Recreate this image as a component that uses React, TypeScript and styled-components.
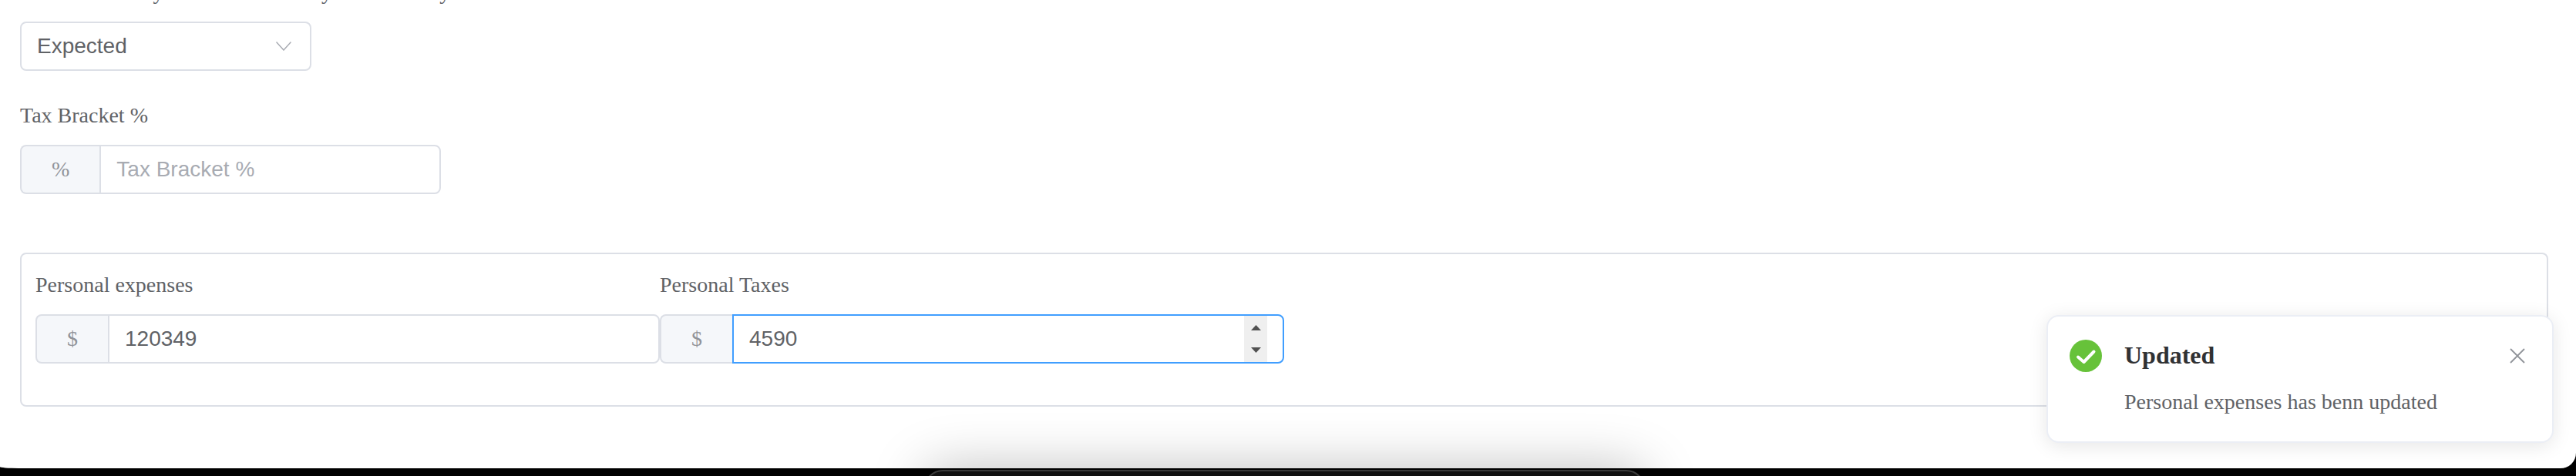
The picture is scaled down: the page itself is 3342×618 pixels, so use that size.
import React from "react";
import styled, { createGlobalStyle } from "styled-components";

const GlobalStyle = createGlobalStyle`
  html, body {
    margin: 0;
    background: #000;
  }
  * {
    box-sizing: border-box;
  }
`;

const serif = `"Liberation Serif", "Times New Roman", serif`;
const sans = `"Liberation Sans", Arial, sans-serif`;

export default function App() {
  return (
    <>
      <GlobalStyle />
      <StyledPage>
        <StyledWindow>
          <StyledClippedLabel>
            Select whether your tax was already included in your total
          </StyledClippedLabel>
          <StyledSelect>
            <span>Expected</span>
            <ChevronIcon />
          </StyledSelect>

          <StyledTaxField>
            <StyledLabel>Tax Bracket %</StyledLabel>
            <StyledInputGroup>
              <StyledAddon>%</StyledAddon>
              <StyledInputWrap>
                <StyledInput type="text" placeholder="Tax Bracket %" readOnly />
              </StyledInputWrap>
            </StyledInputGroup>
          </StyledTaxField>

          <StyledCard>
            <StyledCardGrid>
              <div>
                <StyledLabel>Personal expenses</StyledLabel>
                <StyledInputGroup>
                  <StyledAddon>$</StyledAddon>
                  <StyledInputWrap>
                    <StyledInput type="text" value="120349" readOnly />
                  </StyledInputWrap>
                </StyledInputGroup>
              </div>
              <div>
                <StyledLabel>Personal Taxes</StyledLabel>
                <StyledInputGroup>
                  <StyledAddon>$</StyledAddon>
                  <StyledInputWrap>
                    <StyledInput type="text" value="4590" readOnly $focused />
                    <StyledSpinner>
                      <svg width="13" height="7" viewBox="0 0 13 7">
                        <path d="M6.5 0L13 7H0z" fill="#505050" />
                      </svg>
                      <svg width="13" height="7" viewBox="0 0 13 7">
                        <path d="M0 0h13L6.5 7z" fill="#505050" />
                      </svg>
                    </StyledSpinner>
                  </StyledInputWrap>
                </StyledInputGroup>
              </div>
            </StyledCardGrid>
          </StyledCard>

          <StyledToast>
            <SuccessIcon />
            <StyledToastBody>
              <StyledToastTitle>Updated</StyledToastTitle>
              <StyledToastText>Personal expenses has benn updated</StyledToastText>
            </StyledToastBody>
            <StyledClose>
              <svg width="20" height="20" viewBox="0 0 20 20">
                <path d="M1 1l18 18M19 1L1 19" stroke="#909399" strokeWidth="1.8" fill="none" />
              </svg>
            </StyledClose>
          </StyledToast>
        </StyledWindow>
        <StyledDock />
      </StyledPage>
    </>
  );
}

const ChevronIcon = () => (
  <StyledChevron width="20" height="12" viewBox="0 0 20 12">
    <path d="M0.5 0.5L10 11L19.5 0.5" stroke="#a8abb2" strokeWidth="1.5" fill="none" />
  </StyledChevron>
);

const SuccessIcon = () => (
  <StyledSuccess width="42" height="42" viewBox="0 0 42 42">
    <circle cx="21" cy="21" r="21" fill="#67c23a" />
    <path
      d="M11 22.5l7.5 6.5L31.5 15.5"
      stroke="#fff"
      strokeWidth="4"
      strokeLinecap="round"
      strokeLinejoin="round"
      fill="none"
    />
  </StyledSuccess>
);

const StyledPage = styled.div`
  position: relative;
  width: 3342px;
  height: 618px;
  background: #000;
  overflow: hidden;
`;

const StyledWindow = styled.div`
  position: relative;
  height: 608px;
  padding: 0 36px 0 26px;
  background: #fff;
  border-radius: 0 0 20px 24px / 0 0 20px 2px;
  overflow: hidden;
  font-family: ${serif};
`;

const StyledLabel = styled.div`
  height: 40px;
  margin-bottom: 18px;
  font-size: 28px;
  line-height: 40px;
  color: #606266;
  white-space: nowrap;
`;

const StyledClippedLabel = styled(StyledLabel)`
  margin-top: -30px;
`;

const StyledSelect = styled.div`
  display: flex;
  justify-content: space-between;
  align-items: center;
  width: 378px;
  height: 64px;
  padding: 0 24px 0 20px;
  border: 2px solid #dcdfe6;
  border-radius: 8px;
  font-family: ${sans};
  font-size: 28px;
  color: #606266;
`;

const StyledChevron = styled.svg`
  display: block;
`;

const StyledTaxField = styled.div`
  width: 546px;
  margin-top: 38px;
`;

const StyledInputGroup = styled.div`
  display: flex;
  height: 64px;
`;

const StyledAddon = styled.div`
  display: flex;
  align-items: center;
  padding: 0 39px;
  background: #f5f7fa;
  border: 2px solid #dcdfe6;
  border-right: 0;
  border-radius: 8px 0 0 8px;
  font-size: 28px;
  color: #909399;
`;

const StyledInputWrap = styled.div`
  position: relative;
  flex: 1;
  min-width: 0;
`;

const StyledInput = styled.input<{ $focused?: boolean }>`
  display: block;
  width: 100%;
  height: 64px;
  padding: 0 20px;
  border: 2px solid ${(p) => (p.$focused ? "#409eff" : "#dcdfe6")};
  border-radius: 0 8px 8px 0;
  outline: none;
  background: #fff;
  font-family: ${sans};
  font-size: 28px;
  color: #606266;

  &::placeholder {
    color: #a8abb2;
    opacity: 1;
  }
`;

const StyledSpinner = styled.div`
  position: absolute;
  top: 2px;
  right: 22px;
  bottom: 2px;
  display: flex;
  flex-direction: column;
  justify-content: space-between;
  align-items: center;
  width: 30px;
  padding: 12px 0;
  background: #efefef;

  svg {
    display: block;
  }
`;

const StyledCard = styled.div`
  height: 200px;
  margin-top: 76px;
  padding: 20px 18px 0;
  border: 2px solid #dcdfe6;
  border-radius: 8px;
`;

const StyledCardGrid = styled.div`
  display: grid;
  grid-template-columns: repeat(4, 1fr);
`;

const StyledToast = styled.div`
  position: absolute;
  top: 409px;
  right: 29px;
  display: flex;
  align-items: flex-start;
  gap: 29px;
  width: 658px;
  height: 166px;
  padding: 30px 52px 0 28px;
  background: #fff;
  border: 2px solid #ebeef5;
  border-radius: 16px;
  box-shadow: 0 4px 24px rgba(0, 0, 0, 0.1);
`;

const StyledSuccess = styled.svg`
  flex-shrink: 0;
  display: block;
`;

const StyledToastBody = styled.div`
  min-width: 0;
  margin-top: -4px;
`;

const StyledToastTitle = styled.div`
  font-size: 32px;
  font-weight: 700;
  line-height: 48px;
  color: #303133;
`;

const StyledToastText = styled.div`
  margin-top: 16px;
  font-size: 28px;
  line-height: 42px;
  color: #606266;
  white-space: nowrap;
`;

const StyledClose = styled.div`
  position: absolute;
  top: 41px;
  right: 35px;

  svg {
    display: block;
  }
`;

const StyledDock = styled.div`
  position: absolute;
  top: 610px;
  left: 1199px;
  width: 935px;
  height: 60px;
  background: #111;
  border: 2px solid #3a3a3a;
  border-radius: 24px;
  box-shadow: 0 0 70px rgba(0, 0, 0, 0.28);
`;
